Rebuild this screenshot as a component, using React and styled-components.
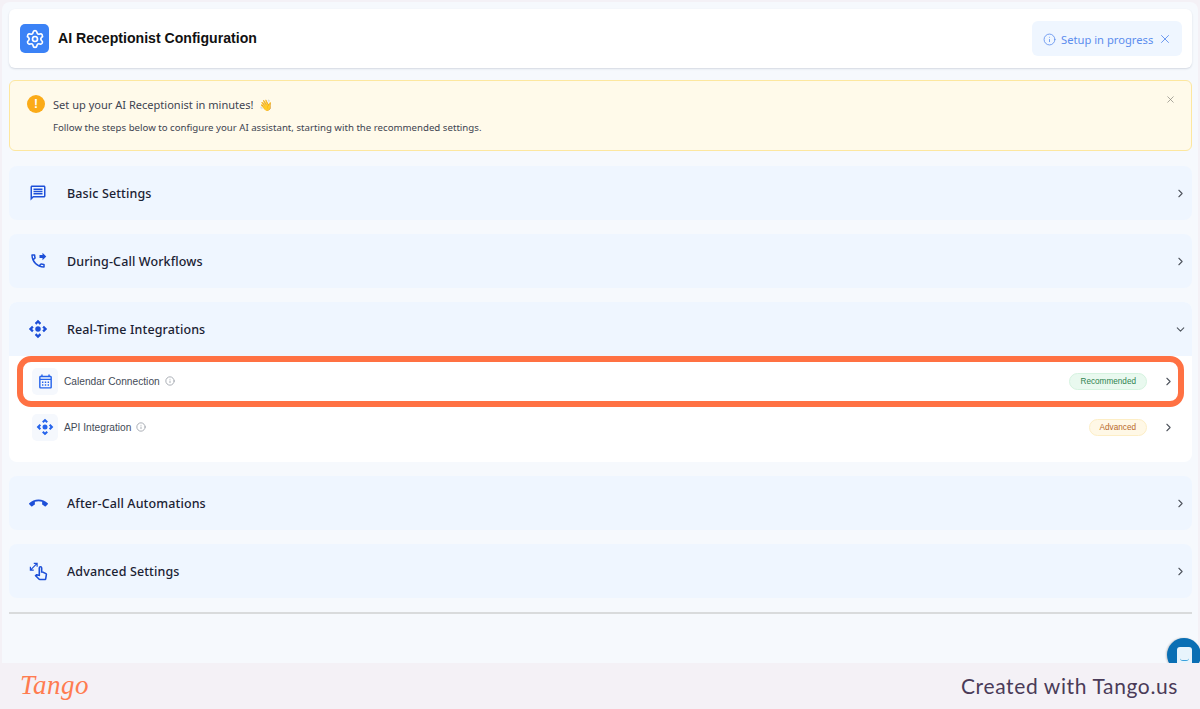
import React from 'react';
import styled, { createGlobalStyle } from 'styled-components';
import { Settings, Info, X, ChevronRight, ChevronDown } from 'lucide-react';
import {
  MdOutlineMessage,
  MdOutlinePhoneForwarded,
  MdControlCamera,
  MdCallEnd,
  MdOutlinePinch,
  MdOutlineCalendarMonth,
} from 'react-icons/md';

const GlobalStyle = createGlobalStyle`
  html, body {
    margin: 0;
    padding: 0;
    height: 709px;
    overflow: hidden;
    background: #f4f1f6;
    font-family: "Noto Sans", sans-serif;
  }
`;

const Page = styled.div`
  width: 1200px;
  height: 709px;
  display: flex;
  flex-direction: column;
  position: relative;
  overflow: hidden;
`;

const Frame = styled.div`
  height: 661px;
  margin: 2px 2px 0 2px;
  padding: 7px 6px 0 7px;
  box-sizing: border-box;
  background: #f6f9fd;
  border-radius: 8px 8px 0 0;
  display: flex;
  flex-direction: column;
`;

const Header = styled.header`
  height: 59px;
  flex: none;
  box-sizing: border-box;
  padding: 0 10px 0 11px;
  background: #fff;
  border-radius: 6px;
  box-shadow: 0 1px 2px rgba(30, 50, 80, 0.16);
  display: flex;
  align-items: center;
  justify-content: space-between;
`;

const TitleWrap = styled.div`
  display: flex;
  align-items: center;
  gap: 9px;
`;

const GearTile = styled.div`
  width: 29px;
  height: 29px;
  border-radius: 5px;
  background: #3b82f6;
  color: #fff;
  display: flex;
  align-items: center;
  justify-content: center;
`;

const Title = styled.h1`
  margin: -2px 0 0;
  font-family: "Liberation Sans", sans-serif;
  font-size: 14.1px;
  font-weight: 700;
  color: #111;
`;

const StatusPill = styled.div`
  width: 150px;
  height: 35px;
  box-sizing: border-box;
  padding: 1px 12px 0 11px;
  border-radius: 6px;
  background: #eff6ff;
  color: #5b8dee;
  font-size: 11.2px;
  display: flex;
  align-items: center;
  gap: 5px;

  svg {
    flex: none;
  }

  span {
    flex: 1;
    white-space: nowrap;
  }
`;

const Alert = styled.section`
  height: 71px;
  flex: none;
  margin-top: 12px;
  box-sizing: border-box;
  padding: 14px 15px 0 17px;
  background: #fffaea;
  border: 1px solid #fde79f;
  border-radius: 6px;
  position: relative;
`;

const AlertTop = styled.div`
  display: flex;
  align-items: center;
  gap: 8px;
  height: 18px;
  font-size: 11.05px;
  color: #3d4350;
`;

const Wave = styled.span`
  margin-left: 3px;
`;

const AlertBadge = styled.div`
  width: 18px;
  height: 18px;
  border-radius: 50%;
  background: #fbab18;
  color: #fff;
  font: 700 12px "Liberation Sans", sans-serif;
  display: flex;
  align-items: center;
  justify-content: center;
`;

const AlertText = styled.p`
  margin: 8px 0 0 26px;
  font-size: 9.67px;
  line-height: 13px;
  color: #3d4350;
`;

const AlertClose = styled.div`
  position: absolute;
  top: 13px;
  right: 15px;
  color: #85827a;
  display: flex;
`;

const Stack = styled.div`
  margin-top: 15px;
  display: flex;
  flex-direction: column;
  gap: 14px;
`;

const Card = styled.div`
  background: #fff;
  border-radius: 8px;
  overflow: hidden;
`;

const SectionHead = styled.div`
  height: 54px;
  box-sizing: border-box;
  padding: 0 5px 0 20px;
  background: #eff6ff;
  display: flex;
  align-items: center;
  color: #1d4fd8;
`;

const HeadIcon = styled.span`
  width: 18px;
  display: flex;
  align-items: center;
  justify-content: center;

  svg {
    flex: none;
  }
`;

const SectionName = styled.span`
  flex: 1;
  margin-left: 20px;
  font-size: 12.5px;
  font-weight: 500;
  letter-spacing: 0.12px;
  color: #1b2233;
`;

const Arrow = styled.span`
  display: flex;
  color: #50565f;
`;

const SubList = styled.div`
  height: 106px;
  box-sizing: border-box;
  padding-top: 2px;
`;

const SubRow = styled.div`
  height: 46px;
  box-sizing: border-box;
  padding: 0 17px 0 23px;
  display: flex;
  align-items: center;
`;

const SubIcon = styled.div`
  width: 26px;
  height: 27px;
  border-radius: 5px;
  background: #f5f8fd;
  color: #2563eb;
  display: flex;
  align-items: center;
  justify-content: center;
`;

const SubName = styled.span`
  margin-left: 6px;
  font-family: "Liberation Sans", sans-serif;
  font-size: 10.2px;
  color: #444b57;
`;

const HelpIcon = styled.span`
  margin-left: 5px;
  display: flex;
  color: #9aa0a8;
`;

const Badge = styled.span`
  margin-left: auto;
  margin-right: 15px;
  height: 17px;
  box-sizing: border-box;
  padding: 0 10px;
  border-radius: 9px;
  font-family: "Liberation Sans", sans-serif;
  font-size: 8.2px;
  display: flex;
  align-items: center;
  color: ${(p) => (p.$tone === 'green' ? '#2f8350' : '#b8692c')};
  background: ${(p) => (p.$tone === 'green' ? '#e9f9ef' : '#fff8e6')};
  border: 1px solid ${(p) => (p.$tone === 'green' ? '#d6f3e0' : '#fdeec6')};
`;

const Divider = styled.hr`
  margin: 14px 0 0;
  border: 0;
  height: 2px;
  background: #d9dbdc;
`;

const Highlight = styled.div`
  position: absolute;
  left: 17px;
  top: 356px;
  width: 1167px;
  height: 51px;
  box-sizing: border-box;
  border: 6px solid #ff7143;
  border-radius: 14px;
  pointer-events: none;
`;

const ChatBubble = styled.div`
  position: absolute;
  left: 1167px;
  top: 638px;
  width: 34px;
  height: 34px;
  border-radius: 50%;
  background: #0a6fb4;
  box-shadow: -1px 0 2px rgba(0, 0, 0, 0.2);
  display: flex;
  align-items: center;
  justify-content: center;
`;

const ChatFace = styled.div`
  width: 15px;
  height: 19px;
  margin-top: 2px;
  border-radius: 3px;
  background: #e8f4fc;
  position: relative;

  &::after {
    content: '';
    position: absolute;
    left: 3px;
    right: 3px;
    top: 11px;
    height: 2px;
    border-bottom: 1px solid #3aa0dc;
    border-radius: 0 0 6px 6px;
  }
`;

const Footer = styled.footer`
  height: 46px;
  flex: none;
  position: relative;
  z-index: 1;
  padding: 0 22px 2px 20px;
  box-sizing: border-box;
  background: #f4f1f6;
  display: flex;
  align-items: center;
  justify-content: space-between;
`;

const TangoMark = styled.span`
  font-family: "Liberation Serif", serif;
  font-style: italic;
  font-size: 27px;
  letter-spacing: 0.5px;
  color: #ff7c50;
`;

const Credit = styled.span`
  font-family: "Lato", sans-serif;
  font-size: 21px;
  font-weight: 400;
  letter-spacing: 0.62px;
  color: #4a3b58;
`;

const sections = [
  { name: 'Basic Settings', Icon: MdOutlineMessage, size: 18 },
  { name: 'During-Call Workflows', Icon: MdOutlinePhoneForwarded, size: 18 },
  {
    name: 'Real-Time Integrations',
    Icon: MdControlCamera,
    size: 22,
    items: [
      { name: 'Calendar Connection', Icon: MdOutlineCalendarMonth, size: 17, badge: 'Recommended', tone: 'green' },
      { name: 'API Integration', Icon: MdControlCamera, size: 20, badge: 'Advanced', tone: 'amber' },
    ],
  },
  { name: 'After-Call Automations', Icon: MdCallEnd, size: 19 },
  { name: 'Advanced Settings', Icon: MdOutlinePinch, size: 19 },
];

export default function App() {
  return (
    <Page>
      <GlobalStyle />
      <Frame>
        <Header>
          <TitleWrap>
            <GearTile>
              <Settings size={20} strokeWidth={2} />
            </GearTile>
            <Title>AI Receptionist Configuration</Title>
          </TitleWrap>
          <StatusPill>
            <Info size={13} strokeWidth={1.5} />
            <span>Setup in progress</span>
            <X size={14} strokeWidth={1.5} />
          </StatusPill>
        </Header>

        <Alert>
          <AlertTop>
            <AlertBadge>!</AlertBadge>
            <span>Set up your AI Receptionist in minutes! <Wave>👋</Wave></span>
          </AlertTop>
          <AlertText>Follow the steps below to configure your AI assistant, starting with the recommended settings.</AlertText>
          <AlertClose>
            <X size={11} strokeWidth={1.5} />
          </AlertClose>
        </Alert>

        <Stack>
          {sections.map(({ name, Icon, size, items }) => (
            <Card key={name}>
              <SectionHead>
                <HeadIcon>
                  <Icon size={size} />
                </HeadIcon>
                <SectionName>{name}</SectionName>
                <Arrow>
                  {items ? <ChevronDown size={13} /> : <ChevronRight size={13} />}
                </Arrow>
              </SectionHead>
              {items && (
                <SubList>
                  {items.map((item) => (
                    <SubRow key={item.name}>
                      <SubIcon>
                        <item.Icon size={item.size} />
                      </SubIcon>
                      <SubName>{item.name}</SubName>
                      <HelpIcon>
                        <Info size={10} />
                      </HelpIcon>
                      <Badge $tone={item.tone}>{item.badge}</Badge>
                      <Arrow>
                        <ChevronRight size={13} />
                      </Arrow>
                    </SubRow>
                  ))}
                </SubList>
              )}
            </Card>
          ))}
        </Stack>

        <Divider />
      </Frame>

      <Highlight />
      <ChatBubble>
        <ChatFace />
      </ChatBubble>

      <Footer>
        <TangoMark>Tango</TangoMark>
        <Credit>Created with Tango.us</Credit>
      </Footer>
    </Page>
  );
}
